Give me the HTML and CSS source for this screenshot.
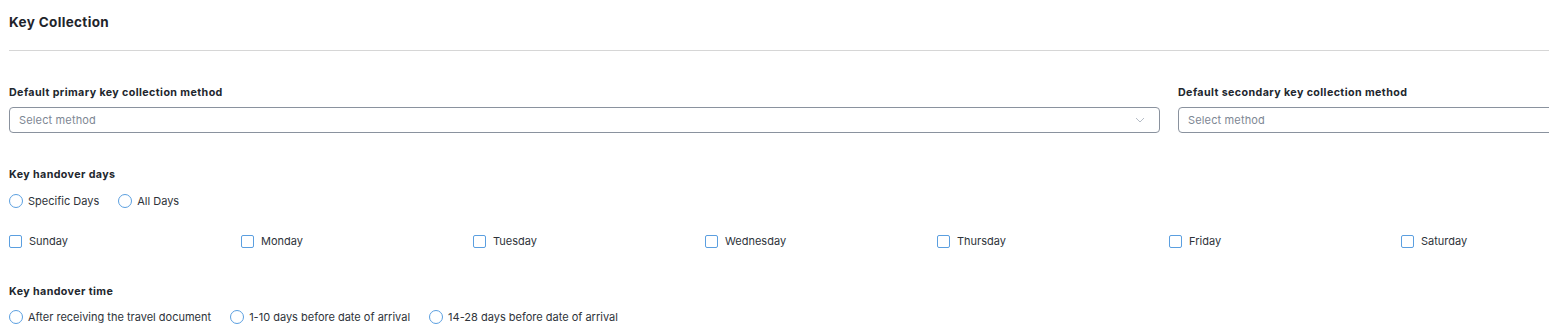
FILE: index.html
```html
<!DOCTYPE html>
<html lang="en">
<head>
    <meta charset="UTF-8">
    <meta name="viewport" content="width=device-width, initial-scale=1.0">
    <title>Key Collection</title>
    <link rel="stylesheet" href="styles.css">
</head>
<body>
    <div class="panel">
        <h2 class="title">Key Collection</h2>
        <hr class="divider">

        <div class="methods">
            <div class="field">
                <label class="label">Default primary key collection method</label>
                <div class="select">
                    <span class="placeholder">Select method</span>
                    <svg class="chevron" width="10" height="6" viewBox="0 0 10 6">
                        <path d="M1 1l4 4 4-4" fill="none" stroke="#b5bcc6" stroke-width="1"/>
                    </svg>
                </div>
            </div>
            <div class="field">
                <label class="label">Default secondary key collection method</label>
                <div class="select">
                    <span class="placeholder">Select method</span>
                    <svg class="chevron" width="10" height="6" viewBox="0 0 10 6">
                        <path d="M1 1l4 4 4-4" fill="none" stroke="#b5bcc6" stroke-width="1"/>
                    </svg>
                </div>
            </div>
        </div>

        <div class="section">
            <div class="label">Key handover days</div>
            <div class="radios">
                <label class="option"><span class="radio"></span>Specific Days</label>
                <label class="option"><span class="radio"></span>All Days</label>
            </div>
            <div class="days">
                <label class="day"><span class="check"></span>Sunday</label>
                <label class="day"><span class="check"></span>Monday</label>
                <label class="day"><span class="check"></span>Tuesday</label>
                <label class="day"><span class="check"></span>Wednesday</label>
                <label class="day"><span class="check"></span>Thursday</label>
                <label class="day"><span class="check"></span>Friday</label>
                <label class="day"><span class="check"></span>Saturday</label>
            </div>
        </div>

        <div class="section time">
            <div class="label">Key handover time</div>
            <div class="radios">
                <label class="option"><span class="radio"></span>After receiving the travel document</label>
                <label class="option"><span class="radio"></span>1-10 days before date of arrival</label>
                <label class="option"><span class="radio"></span>14-28 days before date of arrival</label>
            </div>
        </div>
    </div>
</body>
</html>
```

FILE: styles.css
```css
body {
    margin: 0;
    padding: 0 0 0 9px;
    background: #fff;
    font-family: Inter, "Noto Sans", sans-serif;
    color: #2a2f36;
    overflow: hidden;
}

.panel {
    width: 2400px;
}

.title {
    margin: 0;
    padding-top: 14px;
    font-size: 13.5px;
    font-weight: 700;
    line-height: 16px;
    letter-spacing: 0.35px;
    color: #1f242b;
}

.divider {
    width: 1540px;
    margin: 20px 0 0 0;
    border: none;
    border-top: 1px solid #d6d6d6;
}

.methods {
    display: grid;
    grid-template-columns: 1151px 1151px;
    gap: 18px;
    margin-top: 35px;
}

.label {
    display: block;
    font-size: 10.7px;
    font-weight: 700;
    line-height: 14px;
    letter-spacing: 0.4px;
    color: #22272e;
}

.select {
    display: flex;
    align-items: center;
    justify-content: space-between;
    height: 26px;
    margin-top: 7px;
    padding: 0 14px 0 9px;
    border: 1px solid #8a929e;
    border-radius: 4px;
    box-sizing: border-box;
}

.placeholder {
    font-size: 11px;
    letter-spacing: 0.15px;
    color: #7e8794;
}

.section {
    margin-top: 35px;
}

.radios {
    display: flex;
    gap: 19px;
    margin-top: 12px;
}

.option {
    display: flex;
    align-items: center;
    gap: 5px;
    font-size: 11px;
    line-height: 14px;
    color: #2e333a;
}

.radio {
    width: 12px;
    height: 12px;
    border: 1px solid #5b9fe0;
    border-radius: 50%;
}

.days {
    display: grid;
    grid-template-columns: repeat(7, 232px);
    margin-top: 26px;
}

.day {
    display: flex;
    align-items: center;
    gap: 7px;
    font-size: 11px;
    line-height: 14px;
    color: #2e333a;
}

.check {
    width: 11px;
    height: 11px;
    border: 1.5px solid #5b9fe0;
    border-radius: 2px;
}

.time {
    margin-top: 37px;
}

.time .radios {
    margin-top: 11px;
}
```
